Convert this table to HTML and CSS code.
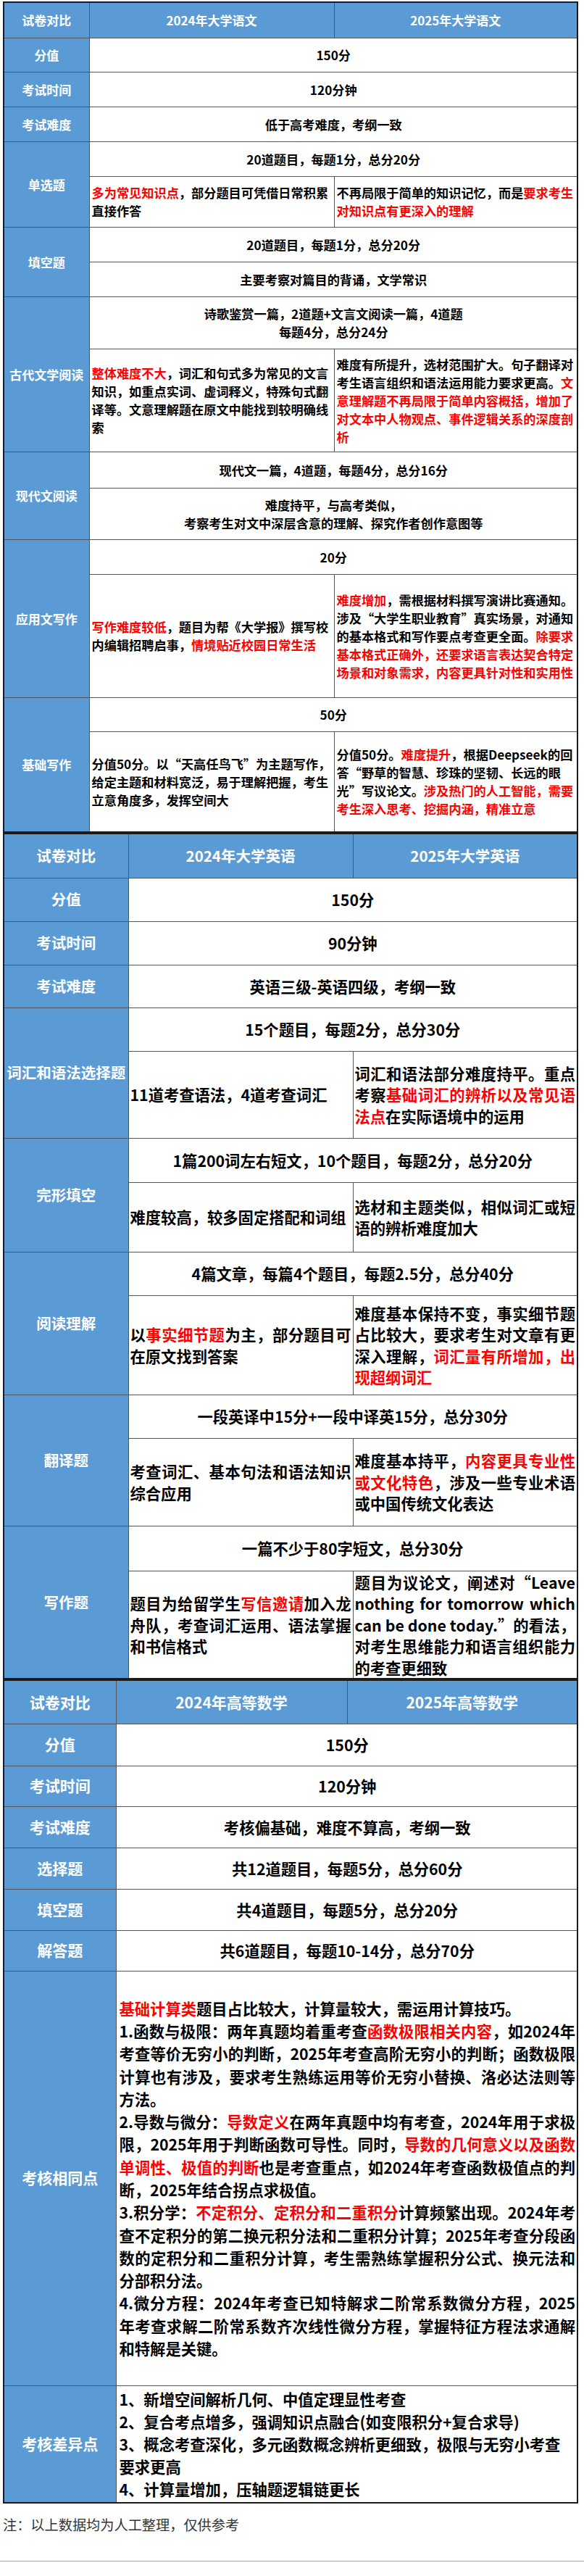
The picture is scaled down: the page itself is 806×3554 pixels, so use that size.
FILE: index.html
```html
<!DOCTYPE html>
<html lang="zh-CN">
<head>
<meta charset="utf-8">
<title>试卷对比</title>
<link rel="stylesheet" href="styles.css">
</head>
<body>
<main class="page">

<table class="cmp cmp-cn">
<colgroup><col class="c-label"><col class="c-a"><col class="c-b"></colgroup>
<thead>
<tr class="h49"><th>试卷对比</th><th>2024年大学语文</th><th>2025年大学语文</th></tr>
</thead>
<tbody>
<tr class="h47"><th>分值</th><td colspan="2" class="center">150分</td></tr>
<tr class="h48"><th>考试时间</th><td colspan="2" class="center">120分钟</td></tr>
<tr class="h48"><th>考试难度</th><td colspan="2" class="center">低于高考难度，考纲一致</td></tr>
<tr class="h48"><th rowspan="2">单选题</th><td colspan="2" class="center">20道题目，每题1分，总分20分</td></tr>
<tr class="h70"><td><span class="red">多为常见知识点</span>，部分题目可凭借日常积累直接作答</td><td>不再局限于简单的知识记忆，而是<span class="red">要求考生对知识点有更深入的理解</span></td></tr>
<tr class="h48"><th rowspan="2">填空题</th><td colspan="2" class="center">20道题目，每题1分，总分20分</td></tr>
<tr class="h48"><td colspan="2" class="center">主要考察对篇目的背诵，文学常识</td></tr>
<tr class="h72"><th rowspan="2">古代文学阅读</th><td colspan="2" class="center">诗歌鉴赏一篇，2道题+文言文阅读一篇，4道题<br>每题4分，总分24分</td></tr>
<tr class="h142"><td><span class="red">整体难度不大</span>，词汇和句式多为常见的文言知识，如重点实词、虚词释义，特殊句式翻译等。文意理解题在原文中能找到较明确线索</td><td>难度有所提升，选材范围扩大。句子翻译对考生语言组织和语法运用能力要求更高。<span class="red">文意理解题不再局限于简单内容概括，增加了对文本中人物观点、事件逻辑关系的深度剖析</span></td></tr>
<tr class="h50"><th rowspan="2">现代文阅读</th><td colspan="2" class="center">现代文一篇，4道题，每题4分，总分16分</td></tr>
<tr class="h71"><td colspan="2" class="center">难度持平，与高考类似，<br>考察考生对文中深层含意的理解、探究作者创作意图等</td></tr>
<tr class="h48"><th rowspan="2">应用文写作</th><td colspan="2" class="center">20分</td></tr>
<tr class="h170"><td><span class="red">写作难度较低</span>，题目为帮《大学报》撰写校内编辑招聘启事，<span class="red">情境贴近校园日常生活</span></td><td><span class="red">难度增加</span>，需根据材料撰写演讲比赛通知。涉及“大学生职业教育”真实场景，对通知的基本格式和写作要点考查更全面。<span class="red">除要求基本格式正确外，还要求语言表达契合特定场景和对象需求，内容更具针对性和实用性</span></td></tr>
<tr class="h47"><th rowspan="2">基础写作</th><td colspan="2" class="center">50分</td></tr>
<tr class="h139"><td>分值50分。以“天高任鸟飞”为主题写作，给定主题和材料宽泛，易于理解把握，考生立意角度多，发挥空间大</td><td>分值50分。<span class="red">难度提升</span>，根据Deepseek的回答“野草的智慧、珍珠的坚韧、长远的眼光”写议论文。<span class="red">涉及热门的人工智能，需要考生深入思考、挖掘内涵，精准立意</span></td></tr>
</tbody>
</table>

<table class="cmp cmp-en">
<colgroup><col class="c-label"><col class="c-a"><col class="c-b"></colgroup>
<thead>
<tr class="h61"><th>试卷对比</th><th>2024年大学英语</th><th>2025年大学英语</th></tr>
</thead>
<tbody>
<tr class="h60"><th>分值</th><td colspan="2" class="center">150分</td></tr>
<tr class="h60"><th>考试时间</th><td colspan="2" class="center">90分钟</td></tr>
<tr class="h59"><th>考试难度</th><td colspan="2" class="center">英语三级-英语四级，考纲一致</td></tr>
<tr class="h60"><th rowspan="2">词汇和语法选择题</th><td colspan="2" class="center">15个题目，每题2分，总分30分</td></tr>
<tr class="h120"><td>11道考查语法，4道考查词汇</td><td>词汇和语法部分难度持平。重点考察<span class="red">基础词汇的辨析以及常见语法点</span>在实际语境中的运用</td></tr>
<tr class="h61"><th rowspan="2">完形填空</th><td colspan="2" class="center">1篇200词左右短文，10个题目，每题2分，总分20分</td></tr>
<tr class="h96"><td>难度较高，较多固定搭配和词组</td><td>选材和主题类似，相似词汇或短语的辨析难度加大</td></tr>
<tr class="h60"><th rowspan="2">阅读理解</th><td colspan="2" class="center">4篇文章，每篇4个题目，每题2.5分，总分40分</td></tr>
<tr class="h137"><td>以<span class="red">事实细节题</span>为主，部分题目可在原文找到答案</td><td>难度基本保持不变，事实细节题占比较大，要求考生对文章有更深入理解，<span class="red">词汇量有所增加，出现超纲词汇</span></td></tr>
<tr class="h60"><th rowspan="2">翻译题</th><td colspan="2" class="center">一段英译中15分+一段中译英15分，总分30分</td></tr>
<tr class="h121"><td>考查词汇、基本句法和语法知识综合应用</td><td>难度基本持平，<span class="red">内容更具专业性或文化特色</span>，涉及一些专业术语或中国传统文化表达</td></tr>
<tr class="h62"><th rowspan="2">写作题</th><td colspan="2" class="center">一篇不少于80字短文，总分30分</td></tr>
<tr class="h148"><td>题目为给留学生<span class="red">写信邀请</span>加入龙舟队，考查词汇运用、语法掌握和书信格式</td><td>题目为议论文，阐述对“Leave nothing for tomorrow which can be done today.”的看法，对考生思维能力和语言组织能力的考查更细致</td></tr>
</tbody>
</table>

<table class="cmp cmp-math">
<colgroup><col class="c-label"><col class="c-a"><col class="c-b"></colgroup>
<thead>
<tr class="h60"><th>试卷对比</th><th>2024年高等数学</th><th>2025年高等数学</th></tr>
</thead>
<tbody>
<tr class="h58"><th>分值</th><td colspan="2" class="center">150分</td></tr>
<tr class="h56"><th>考试时间</th><td colspan="2" class="center">120分钟</td></tr>
<tr class="h57"><th>考试难度</th><td colspan="2" class="center">考核偏基础，难度不算高，考纲一致</td></tr>
<tr class="h57"><th>选择题</th><td colspan="2" class="center">共12道题目，每题5分，总分60分</td></tr>
<tr class="h57"><th>填空题</th><td colspan="2" class="center">共4道题目，每题5分，总分20分</td></tr>
<tr class="h56"><th>解答题</th><td colspan="2" class="center">共6道题目，每题10-14分，总分70分</td></tr>
<tr class="h572"><th>考核相同点</th><td colspan="2" class="long">
<p><span class="red">基础计算类</span>题目占比较大，计算量较大，需运用计算技巧。</p>
<p>1.函数与极限：两年真题均着重考查<span class="red">函数极限相关内容</span>，如2024年考查等价无穷小的判断，2025年考查高阶无穷小的判断；函数极限计算也有涉及，要求考生熟练运用等价无穷小替换、洛必达法则等方法。</p>
<p>2.导数与微分：<span class="red">导数定义</span>在两年真题中均有考查，2024年用于求极限，2025年用于判断函数可导性。同时，<span class="red">导数的几何意义以及函数单调性、极值的判断</span>也是考查重点，如2024年考查函数极值点的判断，2025年结合拐点求极值。</p>
<p>3.积分学：<span class="red">不定积分、定积分和二重积分</span>计算频繁出现。2024年考查不定积分的第二换元积分法和二重积分计算；2025年考查分段函数的定积分和二重积分计算，考生需熟练掌握积分公式、换元法和分部积分法。</p>
<p>4.微分方程：2024年考查已知特解求二阶常系数微分方程，2025年考查求解二阶常系数齐次线性微分方程，掌握特征方程法求通解和特解是关键。</p>
</td></tr>
<tr class="h162"><th>考核差异点</th><td colspan="2" class="list">
<p>1、新增空间解析几何、中值定理显性考查</p>
<p>2、复合考点增多，强调知识点融合(如变限积分+复合求导)</p>
<p>3、概念考查深化，多元函数概念辨析更细致，极限与无穷小考查要求更高</p>
<p>4、计算量增加，压轴题逻辑链更长</p>
</td></tr>
</tbody>
</table>

<p class="note">注：以上数据均为人工整理，仅供参考</p>
</main>
<hr class="rule">
</body>
</html>
```

FILE: styles.css
```css
html, body {
  margin: 0;
  padding: 0;
  background: #ffffff;
}

body {
  font-family: "Noto Sans CJK SC", "Microsoft YaHei", sans-serif;
  color: #000000;
}

.page {
  width: 794px;
  padding: 2px 8px 0 4px;
}

.cmp {
  width: 794px;
  table-layout: fixed;
  border-collapse: collapse;
  border: 2px solid #1b1b1b;
  font-weight: 700;
}

.cmp th,
.cmp td {
  border: 1px solid #555555;
  padding: 0 2px 0 3px;
  vertical-align: middle;
  text-align: left;
}

.cmp th {
  background: #5b9bd5;
  color: #ffffff;
  text-align: center;
  font-weight: 700;
  padding: 0;
}

.cmp td {
  background: #ffffff;
}

.cmp td.center {
  text-align: center;
}

.red {
  color: #ff0000;
}

/* 语文 */
.cmp-cn {
  font-size: 17.2px;
  line-height: 25px;
}
.cmp-cn th {
  font-size: 17px;
}
.cmp-cn .c-label { width: 118px; }
.cmp-cn .c-a { width: 338px; }
.cmp-cn .c-b { width: 336px; }

/* 英语 */
.cmp-en {
  font-size: 21.3px;
  line-height: 29.5px;
}
.cmp-en th {
  font-size: 20.5px;
}
.cmp-en td {
  text-align: justify;
  padding: 0 2px;
}
.cmp-en .c-label { width: 172px; }
.cmp-en .c-a { width: 310px; }
.cmp-en .c-b { width: 310px; }

/* 数学 */
.cmp-math {
  font-size: 21.3px;
  line-height: 31.3px;
}
.cmp-math th {
  font-size: 21px;
}
.cmp-math td {
  padding: 0 2px 0 4px;
}
.cmp-math .c-label { width: 155px; }
.cmp-math .c-a { width: 319px; }
.cmp-math .c-b { width: 318px; }

.cmp td.long p,
.cmp td.list p {
  margin: 0;
}
.cmp td.long {
  text-align: justify;
}
.cmp td.list {
  line-height: 31px;
}

/* row heights */
.h47 { height: 47px; }
.h48 { height: 48px; }
.h49 { height: 49px; }
.h50 { height: 50px; }
.h56 { height: 56px; }
.h57 { height: 57px; }
.h58 { height: 58px; }
.h59 { height: 59px; }
.h60 { height: 60px; }
.h61 { height: 61px; }
.h62 { height: 62px; }
.h70 { height: 70px; }
.h71 { height: 71px; }
.h72 { height: 72px; }
.h96 { height: 96px; }
.h120 { height: 120px; }
.h121 { height: 121px; }
.h137 { height: 137px; }
.h139 { height: 139px; }
.h142 { height: 142px; }
.h148 { height: 148px; }
.h162 { height: 162px; }
.h170 { height: 170px; }
.h572 { height: 572px; }

.note {
  margin: 15px 0 0;
  font-size: 19.2px;
  line-height: 28px;
  font-weight: 400;
  color: #333333;
}

.rule {
  margin: 36px 0 0;
  height: 0;
  border: 0;
  border-top: 1px solid #8da4e6;
}
```
